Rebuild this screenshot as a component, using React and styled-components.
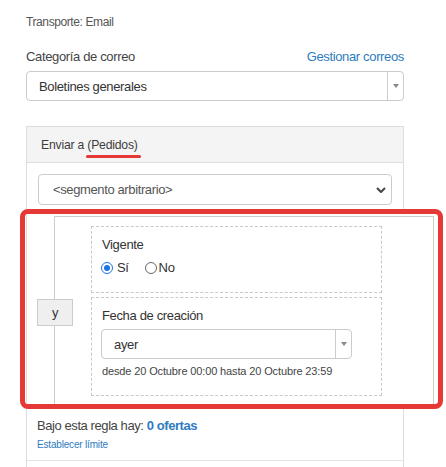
import styled, { createGlobalStyle } from 'styled-components';

const GlobalStyle = createGlobalStyle`
  body {
    margin: 0;
    background: #fff;
    color: #444;
    font-family: 'Liberation Sans', Arial, sans-serif;
    letter-spacing: -0.35px;
  }
`;

const Page = styled.div`
  width: 378px;
  padding: 14px 0 0 26px;
`;

const TransportLine = styled.div`
  font-size: 12px;
  line-height: 16px;
  letter-spacing: -0.4px;
  color: #555;
`;

const FieldHeader = styled.div`
  display: flex;
  justify-content: space-between;
  margin-top: 19px;
  font-size: 13px;
  line-height: 16px;
`;

const Link = styled.span`
  color: #2e7bbf;
  font-size: ${(p) => p.size || 13}px;
  font-weight: ${(p) => (p.bold ? 'bold' : 'normal')};
  letter-spacing: ${(p) => (p.size ? '-0.18px' : 'inherit')};
`;

const SelectBox = styled.div`
  display: flex;
  box-sizing: border-box;
  width: ${(p) => p.width || '100%'};
  height: 30px;
  margin-top: ${(p) => p.top || 0}px;
  margin-left: ${(p) => p.left || 0}px;
  border: 1px solid #ccc;
  border-radius: 4px;
  font-size: 13px;
  color: #333;
`;

const SelectValue = styled.div`
  flex: 1;
  display: flex;
  align-items: center;
  padding-left: 12px;
`;

const SelectArrow = styled.div`
  display: flex;
  align-items: center;
  justify-content: center;
  width: 15px;
  border-left: 1px solid #ccc;

  &::after {
    content: '';
    border-left: 3px solid transparent;
    border-right: 3px solid transparent;
    border-top: 4px solid #888;
  }
`;

const Panel = styled.div`
  margin-top: 25px;
  border: 1px solid #ddd;
`;

const PanelHeader = styled.div`
  display: flex;
  align-items: center;
  height: 35px;
  padding-left: 14px;
  background: #f4f4f4;
  border-bottom: 1px solid #ddd;
  font-size: 12.2px;
  letter-spacing: -0.2px;
  color: #3c3c3c;
`;

const Marked = styled.span`
  position: relative;

  &::after {
    content: '';
    position: absolute;
    left: -1px;
    right: -3px;
    top: 17px;
    height: 3px;
    border-radius: 2px;
    background: #e53935;
  }
`;

const PanelBody = styled.div`
  padding: 11px 11px 9px 11px;
`;

const SegmentSelect = styled.div`
  display: flex;
  align-items: center;
  justify-content: space-between;
  box-sizing: border-box;
  height: 31px;
  padding: 0 5px 0 14px;
  border: 1px solid #ccc;
  border-radius: 4px;
  font-size: 13px;
  letter-spacing: -0.38px;
  color: #555;
`;

const HighlightFrame = styled.div`
  position: relative;
  z-index: 1;
  margin: 4px -51px 0 -18px;
  border: 5px solid #e53935;
  border-radius: 8px;
  background: #fff;
`;

const HighlightInner = styled.div`
  margin-left: 1px;
  padding-top: 2px;
  border-left: 1px solid #ddd;
`;

const RuleGroup = styled.div`
  position: relative;
  margin: 0 4px 0 27px;
  padding: 9px 0 8px 36px;
  border: 1px solid #ccc;
  border-bottom: none;
`;

const JoinButton = styled.div`
  position: absolute;
  left: -18px;
  top: 82px;
  display: flex;
  align-items: center;
  justify-content: center;
  box-sizing: border-box;
  width: 36px;
  height: 27px;
  background: #efefef;
  border: 1px solid #ccc;
  font-size: 13px;
  color: #333;
`;

const Condition = styled.div`
  width: 269px;
  margin-top: ${(p) => p.top || 0}px;
  padding: 10px 10px ${(p) => p.bottom}px 10px;
  border: 1px dashed #c8c8c8;
`;

const CondLabel = styled.div`
  font-size: 13px;
  line-height: 16px;
  color: #333;
`;

const RadioRow = styled.div`
  display: flex;
  gap: 17px;
  margin-top: 7px;
  font-size: 13px;
  line-height: 16px;
  color: #333;
`;

const RadioOption = styled.label`
  display: flex;
  align-items: center;
  gap: ${(p) => (p.checked ? 4 : 2)}px;
`;

const RadioDot = styled.span`
  position: relative;
  box-sizing: border-box;
  width: 12px;
  height: 12px;
  margin-left: -1px;
  border-radius: 50%;
  border: ${(p) => (p.checked ? '1.5px solid #1a73e8' : '1px solid #666')};
  background: #fff;

  &::after {
    content: '';
    display: ${(p) => (p.checked ? 'block' : 'none')};
    position: absolute;
    inset: 2px;
    border-radius: 50%;
    background: #1a73e8;
  }
`;

const RangeNote = styled.div`
  margin-top: 5px;
  font-size: 11px;
  line-height: 14px;
  letter-spacing: -0.13px;
  color: #444;
`;

const Summary = styled.div`
  margin: 9px 0 0 -1px;
  font-size: 13px;
  line-height: 16px;
  letter-spacing: -0.42px;
  color: #444;
`;

const LimitLine = styled.div`
  margin: 2px 0 0 -1px;
  line-height: 13px;
`;

const PanelFooter = styled.div`
  height: 20px;
  border-top: 1px solid #e5e5e5;
`;

const Chevron = () => (
  <svg width="10" height="6" viewBox="0 0 10 6">
    <path d="M1 1l4 4 4-4" fill="none" stroke="#444" strokeWidth="2" />
  </svg>
);

const App = () => {
  return (
    <>
      <GlobalStyle />
      <Page>
        <TransportLine>Transporte: Email</TransportLine>
        <FieldHeader>
          <span>Categoría de correo</span>
          <Link>Gestionar correos</Link>
        </FieldHeader>
        <SelectBox top={6}>
          <SelectValue>Boletines generales</SelectValue>
          <SelectArrow />
        </SelectBox>

        <Panel>
          <PanelHeader>
            Enviar a&nbsp;<Marked>(Pedidos)</Marked>
          </PanelHeader>
          <PanelBody>
            <SegmentSelect>
              &lt;segmento arbitrario&gt;
              <Chevron />
            </SegmentSelect>

            <HighlightFrame>
              <HighlightInner>
                <RuleGroup>
                  <JoinButton>y</JoinButton>
                  <Condition bottom={16}>
                    <CondLabel>Vigente</CondLabel>
                    <RadioRow>
                      <RadioOption checked>
                        <RadioDot checked />
                        Sí
                      </RadioOption>
                      <RadioOption>
                        <RadioDot />
                        No
                      </RadioOption>
                    </RadioRow>
                  </Condition>
                  <Condition top={4} bottom={17}>
                    <CondLabel>Fecha de creación</CondLabel>
                    <SelectBox top={5} left={-1} width="251px">
                      <SelectValue>ayer</SelectValue>
                      <SelectArrow />
                    </SelectBox>
                    <RangeNote>desde 20 Octubre 00:00 hasta 20 Octubre 23:59</RangeNote>
                  </Condition>
                </RuleGroup>
              </HighlightInner>
            </HighlightFrame>

            <Summary>
              Bajo esta regla hay: <Link bold>0 ofertas</Link>
            </Summary>
            <LimitLine>
              <Link size={10}>Establecer límite</Link>
            </LimitLine>
          </PanelBody>
          <PanelFooter />
        </Panel>
      </Page>
    </>
  );
};

export default App;
